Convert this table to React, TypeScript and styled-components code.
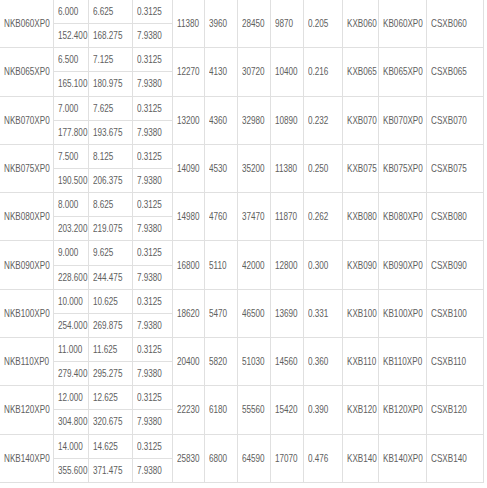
import styled, { createGlobalStyle } from 'styled-components';

const GlobalStyle = createGlobalStyle`
  html, body {
    margin: 0;
    padding: 0;
    background: #fff;
  }
`;

// border positions measured from the screenshot
const COLUMNS = [54, 35, 44, 39.5, 32.5, 32.5, 33, 33.5, 39, 36, 48, 56.5];

type Bearing = {
  model: string;
  inch: [string, string, string];
  mm: [string, string, string];
  specs: [string, string, string, string, string];
  kxb: string;
  kb: string;
  csxb: string;
};

const BEARINGS: Bearing[] = [
  { model: 'NKB060XP0', inch: ['6.000', '6.625', '0.3125'], mm: ['152.400', '168.275', '7.9380'], specs: ['11380', '3960', '28450', '9870', '0.205'], kxb: 'KXB060', kb: 'KB060XP0', csxb: 'CSXB060' },
  { model: 'NKB065XP0', inch: ['6.500', '7.125', '0.3125'], mm: ['165.100', '180.975', '7.9380'], specs: ['12270', '4130', '30720', '10400', '0.216'], kxb: 'KXB065', kb: 'KB065XP0', csxb: 'CSXB065' },
  { model: 'NKB070XP0', inch: ['7.000', '7.625', '0.3125'], mm: ['177.800', '193.675', '7.9380'], specs: ['13200', '4360', '32980', '10890', '0.232'], kxb: 'KXB070', kb: 'KB070XP0', csxb: 'CSXB070' },
  { model: 'NKB075XP0', inch: ['7.500', '8.125', '0.3125'], mm: ['190.500', '206.375', '7.9380'], specs: ['14090', '4530', '35200', '11380', '0.250'], kxb: 'KXB075', kb: 'KB075XP0', csxb: 'CSXB075' },
  { model: 'NKB080XP0', inch: ['8.000', '8.625', '0.3125'], mm: ['203.200', '219.075', '7.9380'], specs: ['14980', '4760', '37470', '11870', '0.262'], kxb: 'KXB080', kb: 'KB080XP0', csxb: 'CSXB080' },
  { model: 'NKB090XP0', inch: ['9.000', '9.625', '0.3125'], mm: ['228.600', '244.475', '7.9380'], specs: ['16800', '5110', '42000', '12800', '0.300'], kxb: 'KXB090', kb: 'KB090XP0', csxb: 'CSXB090' },
  { model: 'NKB100XP0', inch: ['10.000', '10.625', '0.3125'], mm: ['254.000', '269.875', '7.9380'], specs: ['18620', '5470', '46500', '13690', '0.331'], kxb: 'KXB100', kb: 'KB100XP0', csxb: 'CSXB100' },
  { model: 'NKB110XP0', inch: ['11.000', '11.625', '0.3125'], mm: ['279.400', '295.275', '7.9380'], specs: ['20400', '5820', '51030', '14560', '0.360'], kxb: 'KXB110', kb: 'KB110XP0', csxb: 'CSXB110' },
  { model: 'NKB120XP0', inch: ['12.000', '12.625', '0.3125'], mm: ['304.800', '320.675', '7.9380'], specs: ['22230', '6180', '55560', '15420', '0.390'], kxb: 'KXB120', kb: 'KB120XP0', csxb: 'CSXB120' },
  { model: 'NKB140XP0', inch: ['14.000', '14.625', '0.3125'], mm: ['355.600', '371.475', '7.9380'], specs: ['25830', '6800', '64590', '17070', '0.476'], kxb: 'KXB140', kb: 'KB140XP0', csxb: 'CSXB140' },
];

export default function App() {
  return (
    <>
      <GlobalStyle />
      <Table>
        <colgroup>
          {COLUMNS.map((w, i) => (
            <col key={i} style={{ width: w }} />
          ))}
        </colgroup>
        <tbody>
          {BEARINGS.map((b) => [
            <tr key={b.model + '-a'}>
              <Cell rowSpan={2}>
                <Text>{b.model}</Text>
              </Cell>
              {b.inch.map((v, i) => (
                <Cell key={i}>
                  <Text>{v}</Text>
                </Cell>
              ))}
              {[...b.specs, b.kxb, b.kb, b.csxb].map((v, i) => (
                <Cell key={'s' + i} rowSpan={2}>
                  <Text>{v}</Text>
                </Cell>
              ))}
            </tr>,
            <tr key={b.model + '-b'}>
              {b.mm.map((v, i) => (
                <Cell key={i}>
                  <Text>{v}</Text>
                </Cell>
              ))}
            </tr>,
          ])}
        </tbody>
      </Table>
    </>
  );
}

const Table = styled.table`
  border-collapse: collapse;
  table-layout: fixed;
  width: 484px;
  margin: -1px 0 0 -1px;
  font-family: Arial, 'Liberation Sans', sans-serif;
  font-size: 11px;
  color: #606060;

  tr {
    height: 24.15px;
  }
`;

const Cell = styled.td`
  border: 1px solid #e0e0e0;
  padding: 0 0 0 4px;
  vertical-align: middle;
  white-space: nowrap;
  overflow: hidden;
  line-height: 13px;
`;

const Text = styled.span`
  display: inline-block;
  transform: scaleX(0.74);
  transform-origin: 0 50%;
`;
